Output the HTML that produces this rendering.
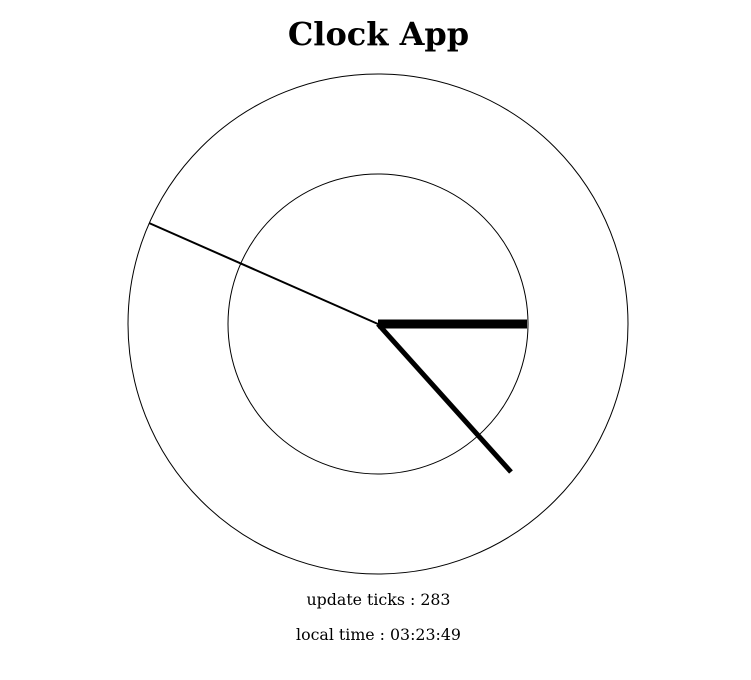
<!DOCTYPE html>
<html><head><style>
body{margin:0;width:751px;height:680px;background:#fff;font-family:"DejaVu Serif",serif;position:relative;overflow:hidden}
h1{position:absolute;top:14px;left:0;width:757px;text-align:center;margin:0;font-size:32px;line-height:40px;font-weight:bold}
.t{position:absolute;left:0;width:757px;text-align:center;font-size:15.8px;line-height:20px}
svg{position:absolute;left:0;top:0}
</style></head><body>
<h1>Clock App</h1>
<svg width="751" height="680">
<circle cx="378" cy="324" r="250" fill="none" stroke="#000" stroke-width="1"/>
<circle cx="378" cy="324" r="150" fill="none" stroke="#000" stroke-width="1"/>
<line x1="378" y1="324" x2="149" y2="223" stroke="#000" stroke-width="2"/>
<line x1="378" y1="324" x2="511" y2="472" stroke="#000" stroke-width="5"/>
<line x1="378" y1="324" x2="527" y2="324" stroke="#000" stroke-width="9"/>
</svg>
<div class="t" style="top:590px">update ticks : 283</div>
<div class="t" style="top:625px">local time : 03:23:49</div>
</body></html>
